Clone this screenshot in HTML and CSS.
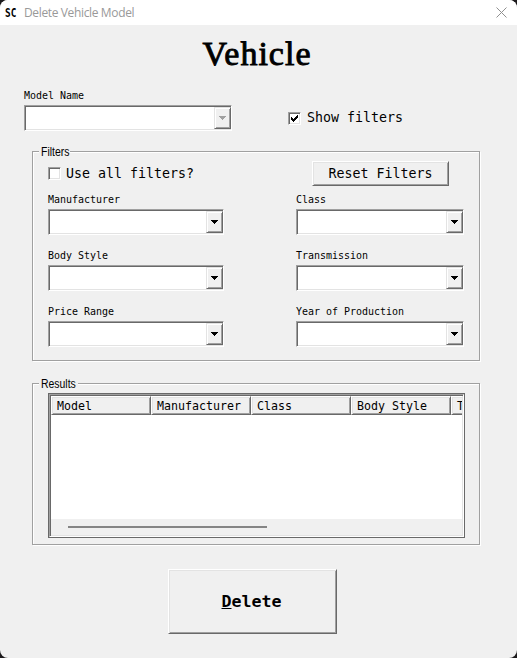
FILE: index.html
```html
<!DOCTYPE html>
<html lang="en">
<head>
<meta charset="utf-8">
<title>Delete Vehicle Model</title>
<link rel="stylesheet" href="styles.css">
</head>
<body>
<div class="window">
  <header class="titlebar">
    <span class="app-icon">SC</span>
    <span class="caption">Delete Vehicle Model</span>
    <svg class="close" width="11" height="11" viewBox="0 0 11 11"><path d="M.5.5l10 10M10.500.5l-10 10" fill="none" stroke="#909090"/></svg>
  </header>
  <main class="content">
    <h1 class="heading"><span>Vehicle</span></h1>
    <div class="model-row">
      <div class="field">
        <label class="label">Model Name</label>
        <div class="combo disabled"><span class="drop"><svg width="7" height="4" viewBox="0 0 7 4"><path d="M0 0h7v1H6v1H5v1H4v1H3V3H2V2H1V1H0z"/></svg></span></div>
      </div>
      <label class="check show"><span class="box"><svg width="7" height="7" viewBox="0 0 7 7"><path d="M0 2h1v1h1v1h1V3h1V2h1V1h1V0h1v3H6v1H5v1H4v1H3v1H2V6H1V5H0z"/></svg></span>Show filters</label>
    </div>
    <section class="group filters">
      <div class="legend short"><span>Filters</span></div>
      <div class="filter-top">
        <label class="check"><span class="box"></span>Use all filters?</label>
        <button class="button reset">Reset Filters</button>
      </div>
      <div class="filter-grid">
        <div class="field"><label class="label">Manufacturer</label><div class="combo"><span class="drop"><svg width="7" height="4" viewBox="0 0 7 4"><path d="M0 0h7v1H6v1H5v1H4v1H3V3H2V2H1V1H0z"/></svg></span></div></div>
        <div class="field"><label class="label">Class</label><div class="combo"><span class="drop"><svg width="7" height="4" viewBox="0 0 7 4"><path d="M0 0h7v1H6v1H5v1H4v1H3V3H2V2H1V1H0z"/></svg></span></div></div>
        <div class="field"><label class="label">Body Style</label><div class="combo"><span class="drop"><svg width="7" height="4" viewBox="0 0 7 4"><path d="M0 0h7v1H6v1H5v1H4v1H3V3H2V2H1V1H0z"/></svg></span></div></div>
        <div class="field"><label class="label">Transmission</label><div class="combo"><span class="drop"><svg width="7" height="4" viewBox="0 0 7 4"><path d="M0 0h7v1H6v1H5v1H4v1H3V3H2V2H1V1H0z"/></svg></span></div></div>
        <div class="field"><label class="label">Price Range</label><div class="combo"><span class="drop"><svg width="7" height="4" viewBox="0 0 7 4"><path d="M0 0h7v1H6v1H5v1H4v1H3V3H2V2H1V1H0z"/></svg></span></div></div>
        <div class="field"><label class="label">Year of Production</label><div class="combo"><span class="drop"><svg width="7" height="4" viewBox="0 0 7 4"><path d="M0 0h7v1H6v1H5v1H4v1H3V3H2V2H1V1H0z"/></svg></span></div></div>
      </div>
    </section>
    <section class="group results">
      <div class="legend"><span>Results</span></div>
      <div class="list">
        <div class="list-inner">
          <div class="columns"><span class="col">Model</span><span class="col">Manufacturer</span><span class="col">Class</span><span class="col">Body Style</span><span class="col last">T</span></div>
          <div class="rows"></div>
          <div class="scrollbar"><div class="thumb"></div></div>
        </div>
      </div>
    </section>
    <button class="button delete"><span class="key">D</span>elete</button>
  </main>
</div>
</body>
</html>
```
FILE: styles.css
```css
* { box-sizing: border-box; }

body {
  margin: 0;
  background: #1c1a1c;
  color: #000;
  font-family: "DejaVu Sans Mono", monospace;
}

.window {
  width: 517px;
  height: 658px;
  overflow: hidden;
  border-radius: 8px;
  background: #f0f0f0;
}

.titlebar {
  display: flex;
  align-items: center;
  height: 25px;
  padding: 0 10px 0 5px;
  background: #fff;
}

.app-icon {
  width: 19px;
  font: bold 12px/24px "DejaVu Sans Mono", monospace;
  transform: scaleX(.78);
  transform-origin: left;
}

.caption {
  font: 12px/24px "Open Sans", sans-serif;
  letter-spacing: -.36px;
  color: #999;
}

.close { margin-left: auto; }

.heading {
  display: flex;
  justify-content: center;
  height: 61px;
  margin: 0;
  padding-right: 3px;
  font: 34px/58px "Liberation Serif", serif;
  letter-spacing: 1px;
  -webkit-text-stroke: .9px #000;
}

.model-row {
  display: flex;
  padding-left: 24px;
}

.model-row .field { width: 208px; }

.label {
  display: block;
  height: 19px;
  font-size: 9.97px;
  line-height: 19px;
  white-space: nowrap;
}

/* Sunken edit area with a raised drop-down button */
.combo {
  display: flex;
  justify-content: flex-end;
  height: 26px;
  padding: 1px 0;
  border: 1px solid;
  border-color: #a0a0a0 #fff #fff #a0a0a0;
  background: #fff;
  box-shadow: inset 1px 1px #696969, inset 0 -1px #e3e3e3;
}

.drop {
  display: flex;
  align-items: center;
  justify-content: center;
  width: 17px;
  border: 1px solid;
  border-color: #e3e3e3 #696969 #696969 #e3e3e3;
  background: #f0f0f0;
  box-shadow: inset 1px 1px #fff, inset -1px -1px #a0a0a0;
}

.disabled .drop { fill: #a0a0a0; }

.check {
  display: flex;
  align-items: center;
  gap: 6px;
  font-size: 13.29px;
  line-height: 20px;
  white-space: nowrap;
}

.show {
  height: 20px;
  margin: 22px 0 0 56px;
}

.box {
  display: flex;
  align-items: center;
  justify-content: center;
  width: 13px;
  height: 13px;
  border: 1px solid;
  border-color: #a0a0a0 #fff #fff #a0a0a0;
  background: #fff;
  box-shadow: inset 1px 1px #696969, inset -1px -1px #e3e3e3;
}

.filters .check { gap: 5px; }

/* Etched frame */
.group {
  width: 448px;
  margin-left: 32px;
  padding: 0 15px;
  border: 1px solid #a0a0a0;
  box-shadow: 1px 1px #fff, inset 1px 1px #fff;
}

.filters { height: 210px; margin-top: 20px; }
.results { height: 162px; margin-top: 22px; }

.legend {
  width: 39px;
  height: 15px;
  margin: -7px 0 0 -9px;
  padding-left: 2px;
  background: #f0f0f0;
  font: 12px/15px "Liberation Sans", sans-serif;
}

.legend.short { width: 31px; }

.legend span {
  display: inline-block;
  transform: scaleX(.87);
  transform-origin: left;
}

.filter-top {
  display: flex;
  justify-content: space-between;
  height: 25px;
  margin: 1px 15px 0 0;
}

.button {
  padding: 0;
  border: 1px solid;
  border-color: #fff #696969 #696969 #fff;
  border-radius: 0;
  background: #f0f0f0;
  box-shadow: inset 1px 1px #e3e3e3, inset -1px -1px #a0a0a0;
  color: #000;
  font-family: "DejaVu Sans Mono", monospace;
}

.reset {
  width: 137px;
  font-size: 13.29px;
}

.filter-grid {
  display: grid;
  grid-template-columns: 176px 168px;
  column-gap: 72px;
  row-gap: 11px;
  margin-top: 4px;
}

.list {
  width: 417px;
  height: 145px;
  margin-top: 1px;
  border: 1px solid #696969;
}

.list-inner {
  display: flex;
  flex-direction: column;
  height: 143px;
  padding: 1px;
  border: 1px solid;
  border-color: #a0a0a0 #fff #fff #a0a0a0;
  box-shadow: inset 1px 1px #696969, inset -1px -1px #e3e3e3;
}

.columns {
  display: flex;
  height: 19px;
}

.col {
  flex: none;
  width: 100px;
  padding-left: 5px;
  border: 1px solid;
  border-color: #fff #696969 #696969 #fff;
  box-shadow: inset 1px 1px #e3e3e3, inset -1px -1px #a0a0a0;
  font-size: 11.63px;
  line-height: 18px;
}

.col.last {
  flex: 1;
  width: auto;
  min-width: 0;
  border-right: 0;
  box-shadow: inset 1px 1px #e3e3e3, inset 0 -1px #a0a0a0;
  overflow: hidden;
}

.rows {
  flex: 1;
  background: #fff;
}

.scrollbar {
  height: 16px;
  padding: 7px 0 0 17px;
}

.thumb {
  width: 199px;
  height: 2px;
  background: #858585;
}

.delete {
  display: block;
  width: 169px;
  height: 65px;
  margin: 24px 0 0 168px;
  padding-right: 2px;
  font-size: 16.61px;
  font-weight: bold;
}

.key {
  text-decoration: underline;
  text-decoration-thickness: 1px;
}
```
